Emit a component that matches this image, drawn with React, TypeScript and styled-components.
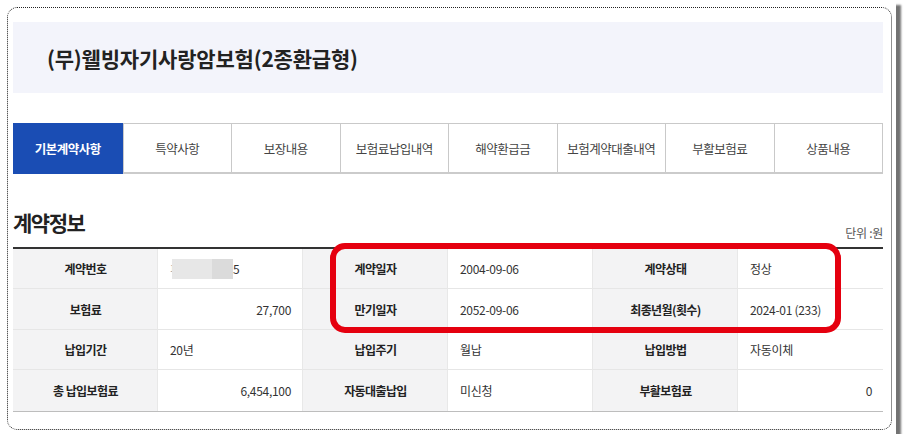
import React from "react";
import styled, { createGlobalStyle } from "styled-components";

const Global = createGlobalStyle`
  html, body { margin: 0; padding: 0; background: #ffffff; }
  body { font-family: "Noto Sans CJK KR", "Noto Sans", sans-serif; color: #222; }
  * { box-sizing: border-box; }
`;

const Page = styled.div`
  position: relative;
  width: 896px;
  height: 434px;
  background: #fff;
  box-shadow: 5px 5px 2px rgba(0, 0, 0, 0.55);
  padding: 7px;
`;

const Frame = styled.div`
  position: relative;
  width: 885px;
  height: 423px;
  border: 1px dotted #222;
  border-radius: 10px;
  padding: 14px 8px 0 5px;
`;

const Banner = styled.div`
  height: 71px;
  background: #f3f4fb;
  display: flex;
  align-items: center;
  padding-left: 34px;
`;

const ProductTitle = styled.h1`
  margin: 0;
  font-size: 21px;
  font-weight: 700;
  letter-spacing: -0.2px;
  color: #222;
`;

const TabBar = styled.div`
  margin-top: 30px;
  display: grid;
  grid-template-columns: repeat(8, 1fr);
  height: 51px;
  border: 1px solid #c9c9c9;
  border-bottom: 2px solid #cbcbcb;
`;

const Tab = styled.div<{ $active?: boolean }>`
  display: flex;
  align-items: center;
  justify-content: center;
  font-size: 12.5px;
  letter-spacing: -0.5px;
  font-weight: ${(p) => (p.$active ? 700 : 400)};
  color: ${(p) => (p.$active ? "#fff" : "#444")};
  background: ${(p) => (p.$active ? "#1a4db4" : "#fff")};
  border-left: 1px solid #c9c9c9;
  margin-top: ${(p) => (p.$active ? "-1px" : "0")};
  margin-bottom: ${(p) => (p.$active ? "-2px" : "0")};
  &:first-child { border-left: none; margin-left: -1px; }
`;

const SectionHead = styled.div`
  margin-top: 38px;
  display: flex;
  justify-content: space-between;
  align-items: flex-end;
`;

const SectionTitle = styled.h2`
  margin: 0 0 14px 0;
  font-size: 21px;
  line-height: 21px;
  font-weight: 700;
  letter-spacing: -1.5px;
  color: #222;
`;

const Unit = styled.span`
  margin-bottom: 8px;
  font-size: 12px;
  line-height: 12px;
  color: #555;
  letter-spacing: -0.3px;
`;

const TableWrap = styled.div`
  position: relative;
`;

const Table = styled.div`
  display: grid;
  grid-template-columns: repeat(6, 145px);
  grid-template-rows: 40px 41px 40px 41px;
  border-top: 2px solid #333;
  border-bottom: 1px solid #bdbdbd;
`;

const Cell = styled.div<{ $head?: boolean; $align?: "left" | "right" | "center"; $last?: boolean }>`
  display: flex;
  align-items: center;
  justify-content: ${(p) =>
    p.$head || p.$align === "center" ? "center" : p.$align === "right" ? "flex-end" : "flex-start"};
  padding: 0 11px 0 12px;
  font-size: 12px;
  letter-spacing: ${(p) => (p.$head ? "-0.6px" : "-0.3px")};
  font-weight: ${(p) => (p.$head ? 700 : 400)};
  color: ${(p) => (p.$head ? "#222" : "#333")};
  background: ${(p) => (p.$head ? "#f3f3f4" : "#fff")};
  border-bottom: ${(p) => (p.$last ? "none" : "1px solid #e6e6e6")};
  border-right: 1px solid #e8e8e8;
  &:nth-child(6n) { border-right: none; }
`;

const Masked = styled.span`
  display: inline-flex;
  align-items: center;
  position: relative;
`;

const Faint = styled.span`
  font-size: 9px;
  color: #999;
  width: 2px;
`;

const MaskBlock = styled.span<{ $w: number; $c: string }>`
  display: inline-block;
  width: ${(p) => p.$w}px;
  height: 20px;
  background: ${(p) => p.$c};
`;

const Highlight = styled.div`
  position: absolute;
  left: 317px;
  top: -4px;
  width: 511px;
  height: 90px;
  border: 6px solid #e5000f;
  border-radius: 15px;
  pointer-events: none;
`;

const tabs = ["기본계약사항", "특약사항", "보장내용", "보험료납입내역", "해약환급금", "보험계약대출내역", "부활보험료", "상품내용"];

type Item = { t: string; head?: boolean; align?: "left" | "right" };

const rows: Item[][] = [
  [
    { t: "계약번호", head: true },
    { t: "__mask__" },
    { t: "계약일자", head: true },
    { t: "2004-09-06" },
    { t: "계약상태", head: true },
    { t: "정상" },
  ],
  [
    { t: "보험료", head: true },
    { t: "27,700", align: "right" },
    { t: "만기일자", head: true },
    { t: "2052-09-06" },
    { t: "최종년월(횟수)", head: true },
    { t: "2024-01 (233)" },
  ],
  [
    { t: "납입기간", head: true },
    { t: "20년" },
    { t: "납입주기", head: true },
    { t: "월납" },
    { t: "납입방법", head: true },
    { t: "자동이체" },
  ],
  [
    { t: "총 납입보험료", head: true },
    { t: "6,454,100", align: "right" },
    { t: "자동대출납입", head: true },
    { t: "미신청" },
    { t: "부활보험료", head: true },
    { t: "0", align: "right" },
  ],
];

export default function App() {
  return (
    <>
      <Global />
      <Page>
        <Frame>
          <Banner>
            <ProductTitle>(무)웰빙자기사랑암보험(2종환급형)</ProductTitle>
          </Banner>
          <TabBar>
            {tabs.map((t, i) => (
              <Tab key={t} $active={i === 0}>
                {t}
              </Tab>
            ))}
          </TabBar>
          <SectionHead>
            <SectionTitle>계약정보</SectionTitle>
            <Unit>단위 :원</Unit>
          </SectionHead>
          <TableWrap>
            <Table>
              {rows.map((r, ri) =>
                r.map((c, ci) => (
                  <Cell key={`${ri}-${ci}`} $head={c.head} $align={c.align} $last={ri === rows.length - 1}>
                    {c.t === "__mask__" ? (
                      <Masked>
                        <Faint>1</Faint>
                        <MaskBlock $w={40} $c="#e7e7e7" />
                        <MaskBlock $w={21} $c="#dbdbdb" />
                        5
                      </Masked>
                    ) : (
                      c.t
                    )}
                  </Cell>
                ))
              )}
            </Table>
            <Highlight />
          </TableWrap>
        </Frame>
      </Page>
    </>
  );
}
